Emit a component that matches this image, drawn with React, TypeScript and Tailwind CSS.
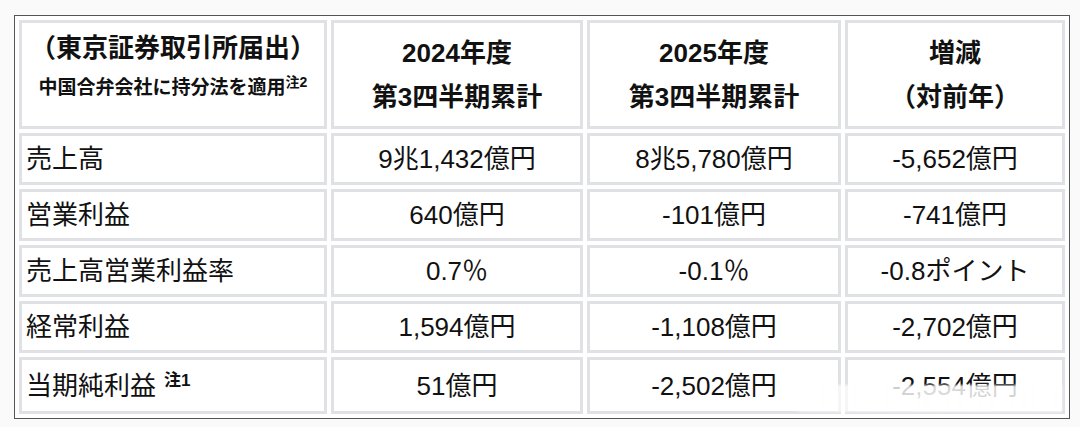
import React from 'react';

const font = { fontFamily: '"Liberation Sans", "Noto Sans CJK JP", sans-serif' };

type Row = { label: string; note?: string; values: [string, string, string] };

const rows: Row[] = [
  { label: '売上高', values: ['9兆1,432億円', '8兆5,780億円', '-5,652億円'] },
  { label: '営業利益', values: ['640億円', '-101億円', '-741億円'] },
  { label: '売上高営業利益率', values: ['0.7％', '-0.1％', '-0.8ポイント'] },
  { label: '経常利益', values: ['1,594億円', '-1,108億円', '-2,702億円'] },
  { label: '当期純利益', note: '注1', values: ['51億円', '-2,502億円', '-2,554億円'] },
];

const cell = 'border-[3px] border-[#e0e1e5] align-middle';

export default function App() {
  return (
    <div className="w-[1080px] h-[427px] bg-[#fafafa] pt-[15px] pl-[14px] relative" style={font}>
      <table className="table-fixed border-separate border-spacing-[4px] border border-[#555] bg-white text-[#111] w-[1056px]">
        <thead>
          <tr className="h-[109px]">
            <th className={`${cell} w-[308px] align-top pt-[5px] font-bold`}>
              <div className="text-[26px] leading-[40px]">（東京証券取引所届出）</div>
              <div className="text-[19px] leading-[30px] mt-[5px]">
                中国合弁会社に持分法を適用
                <sup className="text-[14px] font-bold">注2</sup>
              </div>
            </th>
            <th className={`${cell} w-[252px] text-[26px] leading-[44px] font-bold`}>
              2024年度
              <br />
              第3四半期累計
            </th>
            <th className={`${cell} w-[254px] text-[26px] leading-[44px] font-bold`}>
              2025年度
              <br />
              第3四半期累計
            </th>
            <th className={`${cell} w-[220px] text-[26px] leading-[44px] font-bold`}>
              増減
              <br />
              （対前年）
            </th>
          </tr>
        </thead>
        <tbody>
          {rows.map((r, i) => (
            <tr key={r.label} className={i === rows.length - 1 ? 'h-[57px]' : 'h-[52px]'}>
              <td className={`${cell} text-left pl-[4px] text-[26px] leading-[32px]`}>
                {r.label}
                {r.note && (
                  <sup className="text-[17px] font-bold ml-[8px]">{r.note}</sup>
                )}
              </td>
              {r.values.map((v, j) => (
                <td key={j} className={`${cell} text-center text-[26px] leading-[32px]`}>
                  {v}
                </td>
              ))}
            </tr>
          ))}
        </tbody>
      </table>
      {/* watermark smear over the bottom right corner */}
      <div className="absolute left-[790px] top-[385px] w-[272px] h-[27px] bg-gradient-to-r from-white/60 via-white/85 to-white/80 blur-[1px] rounded-l-full" />
    </div>
  );
}
